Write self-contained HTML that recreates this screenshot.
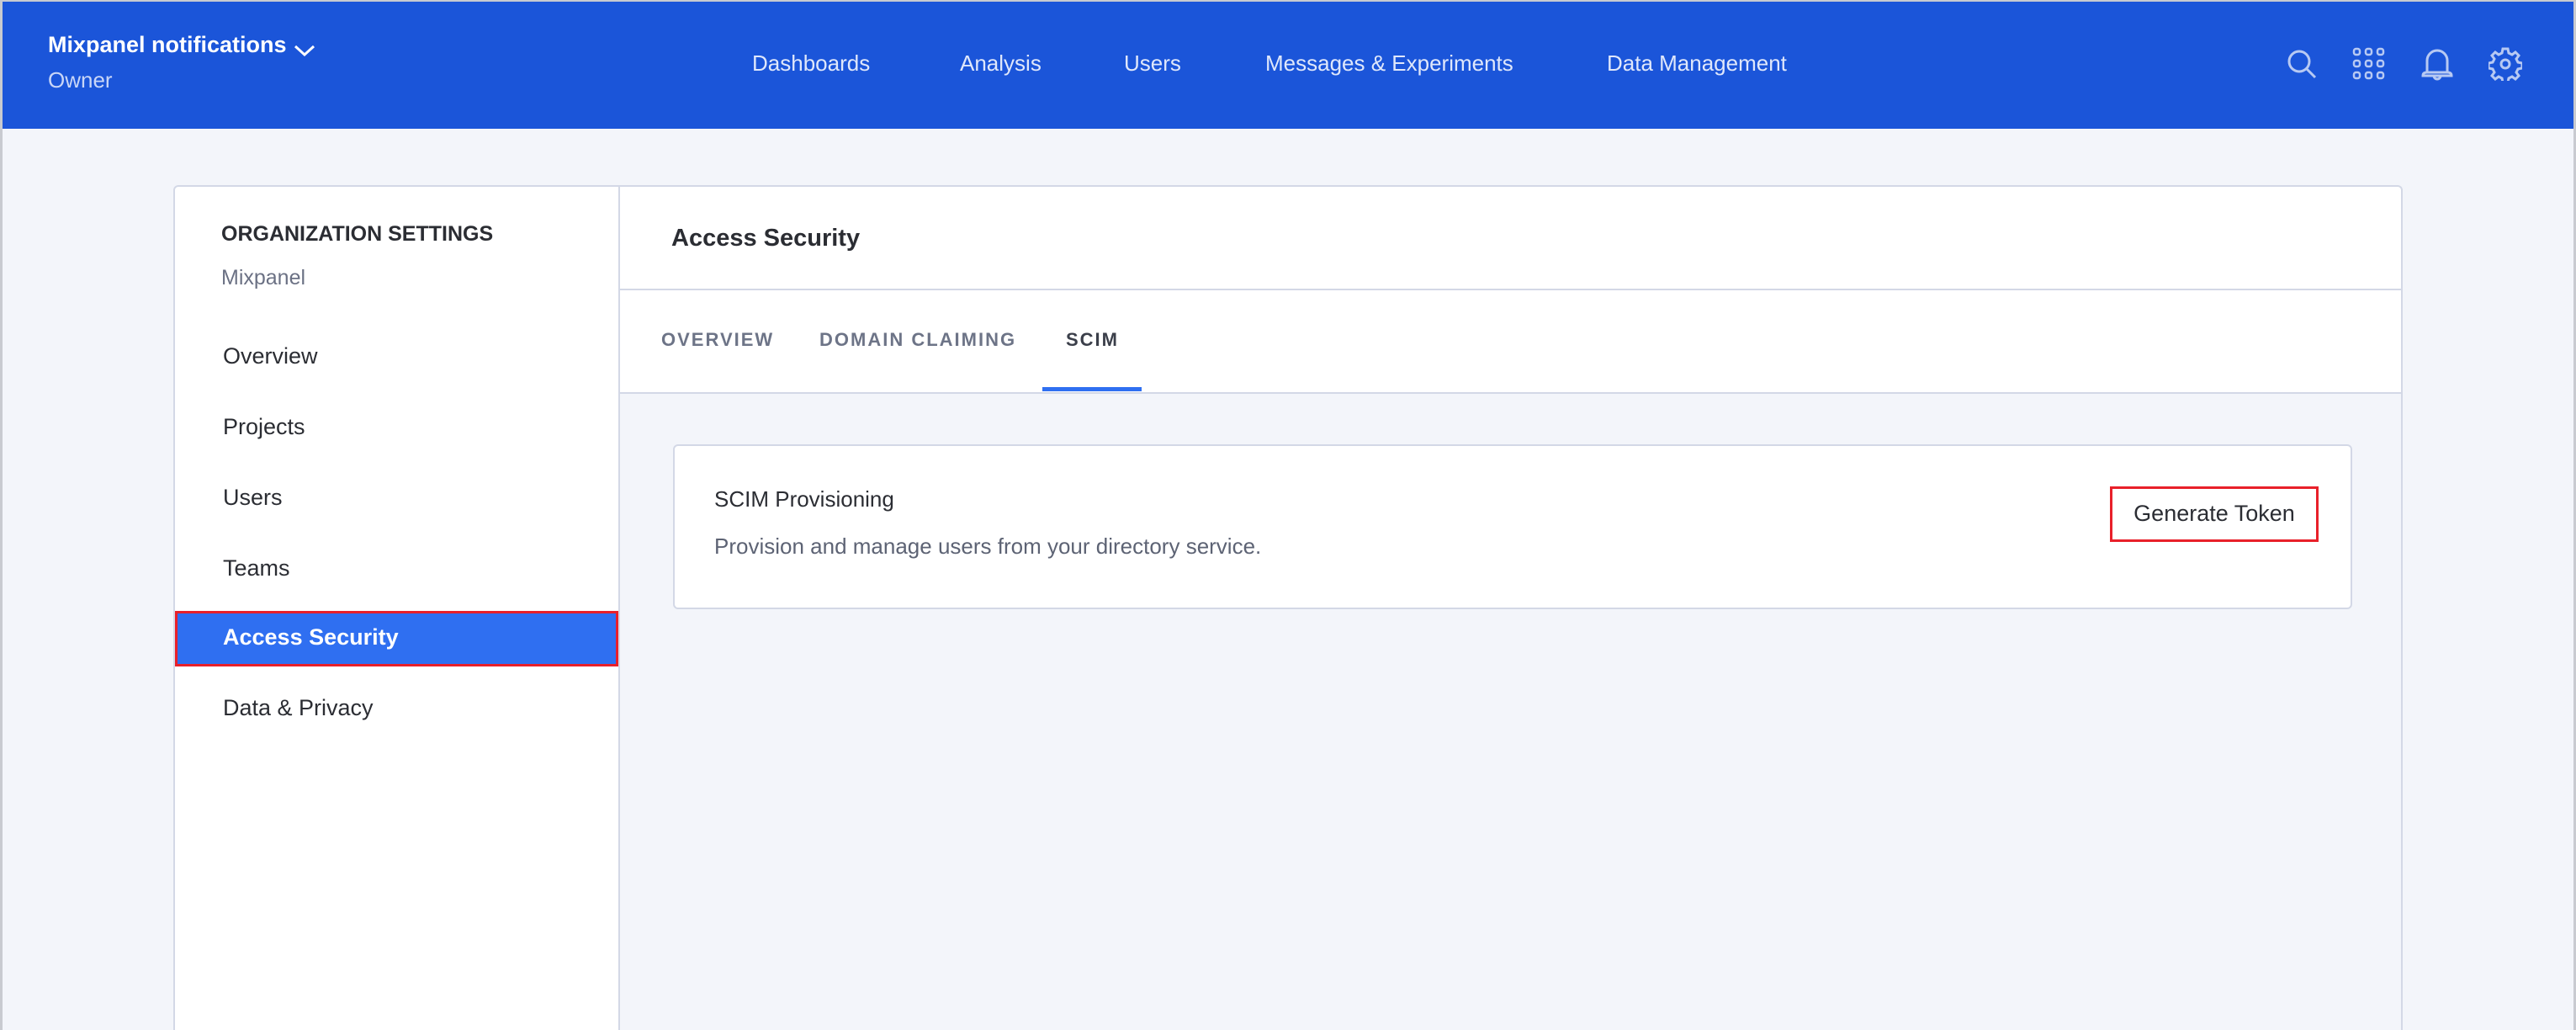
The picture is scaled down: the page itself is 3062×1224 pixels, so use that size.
<!DOCTYPE html>
<html style="width:3062px;height:1224px;overflow:hidden"><head><meta charset="utf-8"><style>
*{margin:0;padding:0;box-sizing:border-box}
body{width:3062px;height:1224px;overflow:hidden;background:#f3f5fa;font-family:"Liberation Sans",sans-serif;position:relative}
.a{position:absolute;white-space:nowrap}
#hdr{position:absolute;left:0;top:0;width:3062px;height:153px;background:#1b55d9}
.nav{color:#dfe7fb;font-size:26px;top:60px}
#panel{position:absolute;left:206px;top:220px;width:2650px;height:1004px;background:#fff;border:2px solid #d3d8e6;border-bottom:none;border-radius:6px 6px 0 0;overflow:hidden}
.side{color:#2b2d33;font-size:27px;left:57px}
.ic{position:absolute;top:56px;width:40px;height:40px}
</style></head><body>
<div id="hdr">
 <div class="a" style="left:57px;top:38px;color:#fff;font-size:27px;font-weight:bold">Mixpanel notifications</div>
 <svg class="a" style="left:348px;top:50px" width="28" height="20" viewBox="0 0 28 20"><path d="M3 5 L14 15 L25 5" fill="none" stroke="#fff" stroke-width="3"/></svg>
 <div class="a" style="left:57px;top:80px;color:#c9d6f7;font-size:26px">Owner</div>
 <div class="a nav" style="left:894px">Dashboards</div>
 <div class="a nav" style="left:1141px">Analysis</div>
 <div class="a nav" style="left:1336px">Users</div>
 <div class="a nav" style="left:1504px">Messages &amp; Experiments</div>
 <div class="a nav" style="left:1910px">Data Management</div>
 <svg class="ic" style="left:2716px" viewBox="0 0 40 40" fill="none" stroke="#b7c9f3" stroke-width="3"><circle cx="17" cy="17" r="12"/><path d="M26 26 L36 36"/></svg>
 <svg class="ic" style="left:2796px" viewBox="0 0 40 40" fill="none" stroke="#b7c9f3" stroke-width="2.5"><g><rect x="2" y="2" width="7" height="7" rx="2.5"/><rect x="16" y="2" width="7" height="7" rx="2.5"/><rect x="30" y="2" width="7" height="7" rx="2.5"/><rect x="2" y="16" width="7" height="7" rx="2.5"/><rect x="16" y="16" width="7" height="7" rx="2.5"/><rect x="30" y="16" width="7" height="7" rx="2.5"/><rect x="2" y="30" width="7" height="7" rx="2.5"/><rect x="16" y="30" width="7" height="7" rx="2.5"/><rect x="30" y="30" width="7" height="7" rx="2.5"/></g></svg>
 <svg class="ic" style="left:2877px" viewBox="0 0 40 40" fill="none" stroke="#b7c9f3" stroke-width="3"><path d="M8 30 V16 A12 12 0 0 1 32 16 V30 M3 34 Q3 30 8 30 H32 Q37 30 37 34 Z M16 34 A4 4 0 0 0 24 34"/></svg>
 <svg class="ic" style="left:2958px" viewBox="0 0 40 40" fill="none" stroke="#b7c9f3" stroke-width="3"><path d="M17 2h6l1 5 4 2 4-3 4 4-3 4 2 4 5 1v6l-5 1-2 4 3 4-4 4-4-3-4 2-1 5h-6l-1-5-4-2-4 3-4-4 3-4-2-4-5-1v-6l5-1 2-4-3-4 4-4 4 3 4-2z"/><circle cx="20" cy="20" r="5"/></svg>
</div>
<div id="panel">
 <div class="a" style="left:55px;top:42px;font-size:25px;font-weight:bold;color:#2b2d33">ORGANIZATION SETTINGS</div>
 <div class="a" style="left:55px;top:94px;font-size:25px;color:#6b7184">Mixpanel</div>
 <div class="a side" style="top:186px">Overview</div>
 <div class="a side" style="top:270px">Projects</div>
 <div class="a side" style="top:354px">Users</div>
 <div class="a side" style="top:438px">Teams</div>
 <div class="a" style="left:0;top:504px;width:527px;height:66px;background:#2f6ff1;border:3px solid #e8202a"></div>
 <div class="a side" style="top:520px;color:#fff;font-weight:bold">Access Security</div>
 <div class="a side" style="top:604px">Data &amp; Privacy</div>
 <div class="a" style="left:527px;top:0;width:2px;height:1004px;background:#d3d8e6"></div>
 <div class="a" style="left:529px;top:0;width:2118px;height:123px;border-bottom:2px solid #d3d8e6"></div>
 <div class="a" style="left:590px;top:45px;font-size:29px;font-weight:bold;color:#2b2d33">Access Security</div>
 <div class="a" style="left:529px;top:244px;width:2118px;height:760px;background:#f3f5fa;border-top:2px solid #d3d8e6"></div>
 <div class="a" style="left:578px;top:169px;font-size:22px;font-weight:bold;letter-spacing:2px;color:#6d7487">OVERVIEW</div>
 <div class="a" style="left:766px;top:169px;font-size:22px;font-weight:bold;letter-spacing:2px;color:#6d7487">DOMAIN CLAIMING</div>
 <div class="a" style="left:1059px;top:169px;font-size:22px;font-weight:bold;letter-spacing:2px;color:#3b3f4a">SCIM</div>
 <div class="a" style="left:1031px;top:238px;width:118px;height:5px;background:#2f6ff1"></div>
 <div class="a" style="left:592px;top:306px;width:1996px;height:196px;background:#fff;border:2px solid #d3d8e6;border-radius:6px">
  <div class="a" style="left:47px;top:48px;font-size:26px;color:#2b2d33">SCIM Provisioning</div>
  <div class="a" style="left:47px;top:104px;font-size:26px;color:#5d6374">Provision and manage users from your directory service.</div>
  <div class="a" style="left:1706px;top:48px;width:248px;height:66px;border:3px solid #e8202a;background:#fff;font-size:27px;color:#2b2d33;text-align:center;line-height:58px">Generate Token</div>
 </div>
</div>
<div class="a" style="left:0;top:0;width:3px;height:1224px;background:#c8cad0"></div>
<div class="a" style="left:3059px;top:0;width:3px;height:1224px;background:#c8cad0"></div>
<div class="a" style="left:0;top:0;width:3062px;height:2px;background:#c8cad0"></div>
</body></html>
